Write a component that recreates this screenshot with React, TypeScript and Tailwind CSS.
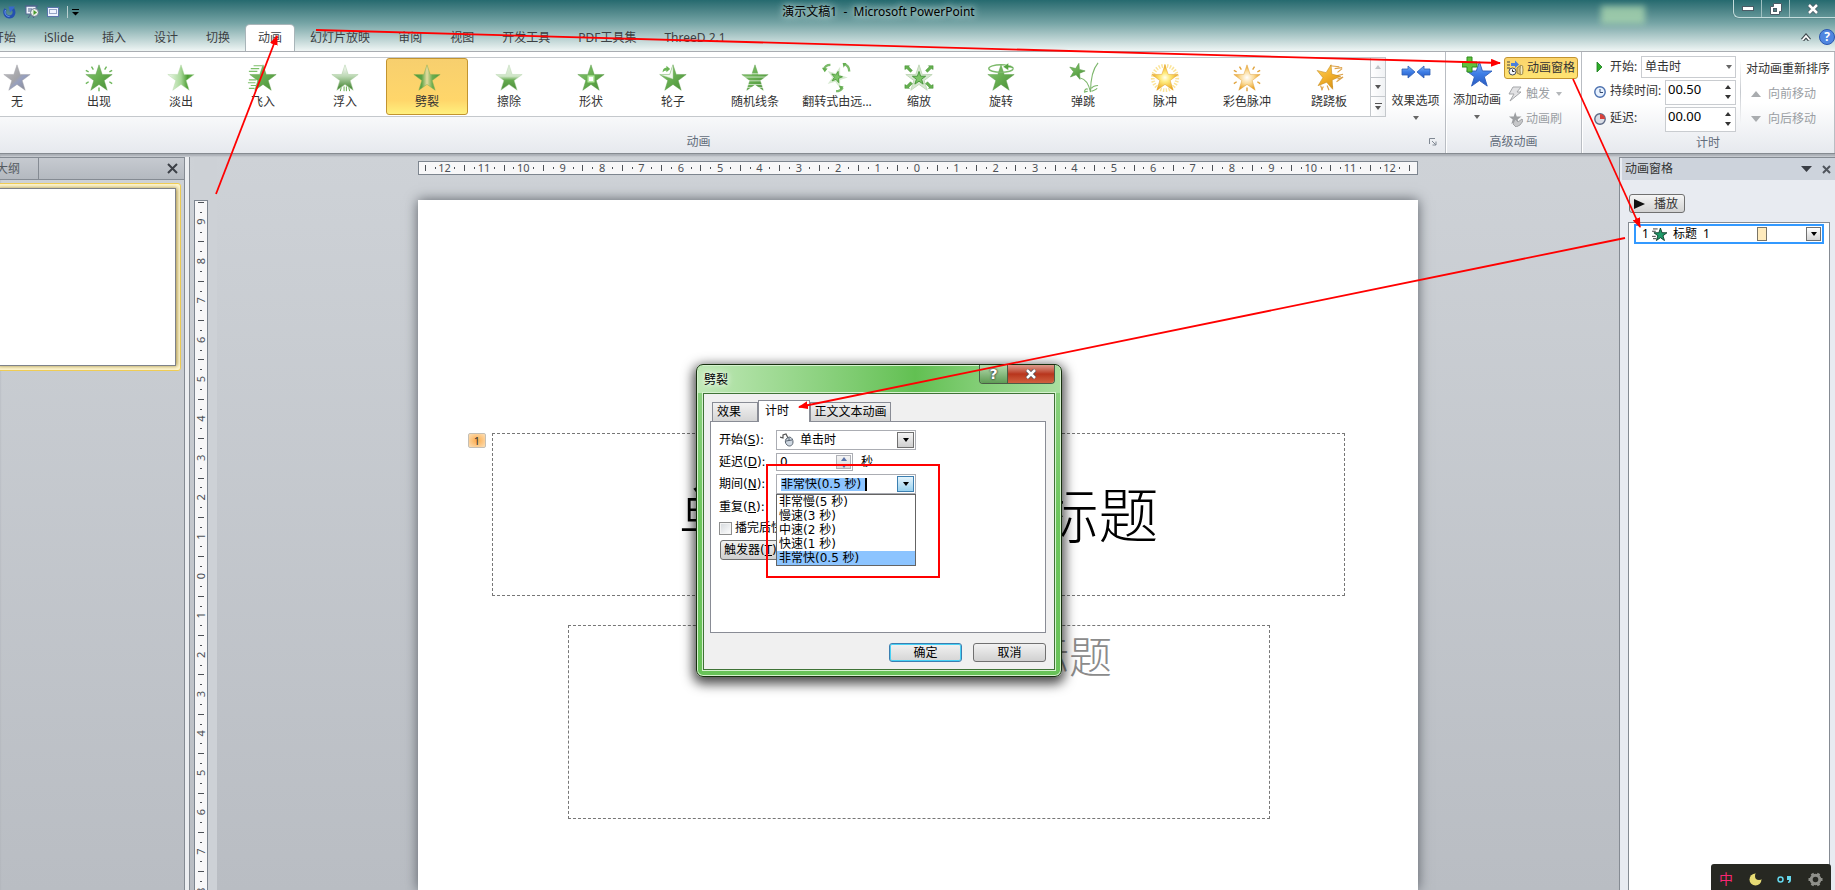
import React, { useState } from "react";
import clsx from "clsx";

const STAR =
  "16,2 19.4,12.2 30,12.3 21.5,18.7 24.7,29 16,22.8 7.3,29 10.5,18.7 2,12.3 12.6,12.2";

type EffectKind =
  | "none"
  | "appear"
  | "fade"
  | "fly"
  | "float"
  | "split"
  | "wipe"
  | "shape"
  | "wheel"
  | "bars"
  | "growTurn"
  | "zoom"
  | "swivel"
  | "bounce"
  | "pulse"
  | "colorPulse"
  | "teeter";

const effects: { kind: EffectKind; label: string }[] = [
  { kind: "none", label: "无" },
  { kind: "appear", label: "出现" },
  { kind: "fade", label: "淡出" },
  { kind: "fly", label: "飞入" },
  { kind: "float", label: "浮入" },
  { kind: "split", label: "劈裂" },
  { kind: "wipe", label: "擦除" },
  { kind: "shape", label: "形状" },
  { kind: "wheel", label: "轮子" },
  { kind: "bars", label: "随机线条" },
  { kind: "growTurn", label: "翻转式由远..." },
  { kind: "zoom", label: "缩放" },
  { kind: "swivel", label: "旋转" },
  { kind: "bounce", label: "弹跳" },
  { kind: "pulse", label: "脉冲" },
  { kind: "colorPulse", label: "彩色脉冲" },
  { kind: "teeter", label: "跷跷板" },
];

const tabs = [
  "开始",
  "iSlide",
  "插入",
  "设计",
  "切换",
  "动画",
  "幻灯片放映",
  "审阅",
  "视图",
  "开发工具",
  "PDF工具集",
  "ThreeD 2.1",
];

const durations = [
  "非常慢(5 秒)",
  "慢速(3 秒)",
  "中速(2 秒)",
  "快速(1 秒)",
  "非常快(0.5 秒)",
];

const Gradients: React.FC = () => (
  <svg width="0" height="0" className="absolute" aria-hidden="true">
    <defs>
      <linearGradient id="g-green" x1="0" y1="0" x2="1" y2="1">
        <stop offset="0" stopColor="#8cc878" />
        <stop offset="0.5" stopColor="#66ad50" />
        <stop offset="1" stopColor="#478c34" />
      </linearGradient>
      <linearGradient id="g-gray" x1="0" y1="0" x2="1" y2="1">
        <stop offset="0" stopColor="#c4c4c8" />
        <stop offset="0.5" stopColor="#a3a3a7" />
        <stop offset="0.6" stopColor="#97a0bf" />
        <stop offset="1" stopColor="#86868a" />
      </linearGradient>
      <linearGradient id="g-fade" x1="0" y1="0" x2="1" y2="0">
        <stop offset="0" stopColor="#eef8ea" />
        <stop offset="0.5" stopColor="#a6d796" />
        <stop offset="0.75" stopColor="#4d9e34" />
        <stop offset="1" stopColor="#6fb65a" />
      </linearGradient>
      <linearGradient id="g-float" x1="0" y1="0" x2="0" y2="1">
        <stop offset="0" stopColor="#ffffff" />
        <stop offset="0.45" stopColor="#bcd8b4" />
        <stop offset="1" stopColor="#357c22" />
      </linearGradient>
      <linearGradient id="g-split" x1="0" y1="0" x2="1" y2="0">
        <stop offset="0" stopColor="#4d9a3a" />
        <stop offset="0.3" stopColor="#5fa548" />
        <stop offset="0.5" stopColor="#e6dca0" />
        <stop offset="0.7" stopColor="#6fae50" />
        <stop offset="1" stopColor="#4d9a3a" />
      </linearGradient>
      <linearGradient id="g-wipe" x1="0" y1="0" x2="0" y2="1">
        <stop offset="0" stopColor="#e2efdd" />
        <stop offset="0.45" stopColor="#cfe5c7" />
        <stop offset="0.6" stopColor="#66ab50" />
        <stop offset="1" stopColor="#4a8c37" />
      </linearGradient>
      <linearGradient id="g-gold" x1="0" y1="0" x2="1" y2="1">
        <stop offset="0" stopColor="#ffd766" />
        <stop offset="0.5" stopColor="#f3b12c" />
        <stop offset="1" stopColor="#d08a10" />
      </linearGradient>
      <radialGradient id="g-glow">
        <stop offset="0" stopColor="#fffff0" />
        <stop offset="0.35" stopColor="#ffec80" />
        <stop offset="1" stopColor="#eda91d" />
      </radialGradient>
      <radialGradient id="g-glow2">
        <stop offset="0" stopColor="#ffffff" />
        <stop offset="0.5" stopColor="#fbdc9c" />
        <stop offset="1" stopColor="#e8a020" />
      </radialGradient>
      <linearGradient id="g-blue" x1="0" y1="0" x2="0" y2="1">
        <stop offset="0" stopColor="#7fb4f5" />
        <stop offset="0.5" stopColor="#3d7de6" />
        <stop offset="1" stopColor="#2a5bc0" />
      </linearGradient>
    </defs>
  </svg>
);

const EffectIcon: React.FC<{ kind: EffectKind }> = ({ kind }) => {
  const star = (fill: string, stroke = "#5c9c49") => (
    <polygon points={STAR} fill={fill} stroke={stroke} strokeWidth="0.5" />
  );
  const green = star("url(#g-green)");
  let art: React.ReactNode = green;

  switch (kind) {
    case "none":
      art = star("url(#g-gray)", "#a0a0a8");
      break;
    case "appear":
      art = (
        <>
          {green}
          <path
            d="M8 4l2 3M24 4l-2 3M2 8l3 1.500M30 8l-3 1.500M2 22l3-2M30 22l-3-2M16 26v4"
            stroke="#6db65a"
            strokeWidth="1.500"
          />
        </>
      );
      break;
    case "fade":
      art = star("url(#g-fade)", "#b4d9a8");
      break;
    case "fly":
      art = (
        <>
          {green}
          <path
            d="M6 3h9M3 6h9M1 9h9M1 18h8M0 21h8M3 24h6M1 27h6"
            stroke="#7cc069"
            strokeWidth="1.200"
          />
        </>
      );
      break;
    case "float":
      art = (
        <>
          {star("url(#g-float)", "#a6c99b")}
          <path d="M12 26l-1 4M15 25v5M17.500 25v5M20 26l1 4" stroke="#5fa84a" />
        </>
      );
      break;
    case "split":
      art = star("url(#g-split)", "#86ad50");
      break;
    case "wipe":
      art = star("url(#g-wipe)", "#b9d7b0");
      break;
    case "shape":
      art = (
        <>
          {green}
          <rect x="13" y="14" width="6" height="6" fill="#fff" stroke="#b5eba0" strokeWidth="1.500" />
        </>
      );
      break;
    case "wheel":
      art = (
        <>
          {green}
          <path d="M16 2v15L2 12.300h10.600z" fill="#f1f8ee" stroke="#a7d09a" strokeWidth="0.500" />
          <path d="M5 10c0-4 2-5 4-5V3l4 3.500L9 10V8C7 8 6 9 5 10z" fill="#6ab455" />
        </>
      );
      break;
    case "bars":
      art = (
        <>
          {green}
          <path d="M0 11.500h32M0 15h32M0 19h32M0 23h32M0 26h32" stroke="#fff" strokeOpacity="0.7" />
        </>
      );
      break;
    case "growTurn":
      art = (
        <>
          <polygon points={STAR} fill="#d7ead1" transform="rotate(18 16 15) translate(3 2) scale(.8)" />
          <polygon points={STAR} fill="#7cc568" stroke="#4c9a39" strokeWidth="2" transform="translate(9 8) scale(.42) rotate(15 16 16)" />
          <path
            d="M2 7C3 3 5 2 9 2M23 1c4 1 6 4 6 8M15 30c4 0 6-2 7-4"
            fill="none"
            stroke="#7dbb6b"
            strokeWidth="2.500"
          />
          <path d="M0 5l3 5 3-4zM22 0l4 0-3 5zM18 24l5 1-3 4z" fill="#65ae51" />
        </>
      );
      break;
    case "zoom":
      art = (
        <>
          <polygon points={STAR} fill="#d5e6cf" stroke="#c0d8b8" />
          <polygon points={STAR} fill="#7cc568" stroke="#47953a" strokeWidth="2" transform="translate(8 8) scale(.5)" />
          <path
            d="M1 3h5L5 4l4 4-2 2-4-4-2 1zM31 3h-5l1 1-4 4 2 2 4-4 2 1zM1 27h5l-1-1 4-4-2-2-4 4-2-1zM31 27h-5l1-1-4-4 2-2 4 4 2-1z"
            fill="#65b050"
            stroke="#3f8c2e"
            strokeWidth="0.500"
          />
        </>
      );
      break;
    case "swivel":
      art = (
        <>
          {green}
          <ellipse cx="16" cy="6" rx="13" ry="4" fill="none" stroke="#7dba6b" strokeWidth="1.500" />
          <path d="M18 4l6-4v2.500c4 .5 6 2 6 4.500-2-2-4-2-6-2v3z" fill="#55a340" stroke="#fff" strokeWidth="0.500" />
        </>
      );
      break;
    case "bounce":
      art = (
        <>
          <polygon points={STAR} fill="url(#g-green)" stroke="#5c9c49" transform="translate(0 -1) scale(.6) rotate(14 16 16)" />
          <path
            d="M13 16c6 1 9 6 11 15 0-14 2-24 8-31M18 31c-1-3 2-4 3-3M25 27c2-3 5-3 7-3M25 30c2-1 5-1 6-3M17 31l4-1"
            fill="none"
            stroke="#7cb66b"
            strokeWidth="1.200"
          />
        </>
      );
      break;
    case "pulse":
      art = (
        <>
          <circle cx="16" cy="16" r="13" fill="none" stroke="#fbe49a" strokeWidth="4" strokeDasharray="1.500 1.500" />
          {star("url(#g-glow)", "#dc9a28")}
        </>
      );
      break;
    case "colorPulse":
      art = (
        <>
          {star("url(#g-glow2)", "#dfa13c")}
          <path
            d="M8 4l2 3M24 4l-2 3M2 8l3 1.500M30 8l-3 1.500M2 22l3-2M30 22l-3-2M16 26v4"
            stroke="#e0a33c"
            strokeWidth="1.500"
          />
        </>
      );
      break;
    case "teeter":
      art = (
        <>
          <path
            d="M17 3l10 1M22 6l8-1M25 10l5-4M22 14l9-2M24 20l7-5M25 17l6-2M7 24l2 5M10 25l-2 4M14 24l2 5M20 26l-3-5"
            stroke="#dda24a"
            strokeWidth="1.200"
          />
          <polygon points={STAR} fill="url(#g-gold)" stroke="#c48a1c" strokeWidth="0.600" transform="rotate(14 16 16) scale(.92)" />
        </>
      );
      break;
  }

  return (
    <svg width="32" height="32" viewBox="-1 -1 34 34" className="shrink-0">
      {art}
    </svg>
  );
};

const Caret: React.FC<{ up?: boolean; className?: string }> = ({ up, className }) => (
  <svg width="6" height="4" viewBox="0 0 6 4" className={clsx("shrink-0", className)}>
    <path d={up ? "M0 4h6L3 0z" : "M0 0h6L3 4z"} fill="currentColor" />
  </svg>
);

const Clock: React.FC<{ red?: boolean }> = ({ red }) => (
  <svg width="12" height="12" viewBox="0 0 12 12" className="shrink-0">
    <circle cx="6" cy="6" r="5.200" fill={red ? "#d9dde6" : "#e8f2ff"} stroke={red ? "#5d6a86" : "#4a6fae"} strokeWidth="1.400" />
    {red ? (
      <path d="M6 1v5h5a5 5 0 00-5-5z" fill="#d8403a" />
    ) : (
      <path d="M6 3v3.500h3" fill="none" stroke="#33486f" />
    )}
  </svg>
);

const TitleBar: React.FC = () => (
  <div className="flex h-6 items-center">
    <div className="flex w-[120px] items-center gap-2 pl-[3px]">
      <button aria-label="重复" className="w-[14px]">
        <svg width="13" height="14" viewBox="0 0 13 14">
          <path d="M2.500 4C0 8 3 12 6.500 12s6-4 3.500-8" fill="none" stroke="#2450b0" strokeWidth="2.800" />
          <path d="M2.500 5C1 8 3 11.500 6.500 11.500" fill="none" stroke="#6f9cf0" />
          <path d="M5.500 1.500h6.500L7 7.500z" fill="#3768cc" />
        </svg>
      </button>
      <button aria-label="从头放映">
        <svg width="14" height="14" viewBox="0 0 14 14">
          <rect x="1" y="1" width="10" height="8" fill="#eef3fb" stroke="#566b96" />
          <path d="M0 1h13M3 13l3-4 3 4M3 4h4M3 6h3" stroke="#4b5f88" fill="none" />
          <circle cx="9.500" cy="7.500" r="4" fill="#e8efe8" stroke="#65768f" />
          <path d="M8.500 5v5l3.500-2.500z" fill="#4b9a2e" />
        </svg>
      </button>
      <button aria-label="选择">
        <svg width="12" height="10" viewBox="0 0 12 10">
          <rect x="0.500" y="0.500" width="11" height="9" fill="#eef4ff" stroke="#5a76ad" />
          <rect x="2.500" y="2.500" width="7" height="4" fill="none" stroke="#3c568c" strokeDasharray="1 1" />
        </svg>
      </button>
      <span className="h-3 w-px bg-[#b9cfcf]" />
      <button aria-label="自定义快速访问工具栏" className="-ml-1">
        <svg width="7" height="7" viewBox="0 0 7 7">
          <path d="M0 .5h7" stroke="#000" />
          <path d="M0 3h7L3.500 6.500z" fill="#000" />
        </svg>
      </button>
    </div>
    <h1 className="flex-1 pr-24 text-center text-xs text-black [text-shadow:0_0_6px_#cfe6e2,0_0_8px_#cfe6e2]">
      演示文稿1&nbsp; -&nbsp; Microsoft PowerPoint
    </h1>
    <div className="flex h-[18px] w-[102px] self-start rounded-bl-md border-b border-l border-[#c3dcdc] shadow-[0_0_1px_#173f42]">
      <button aria-label="最小化" className="flex w-7 items-center justify-center border-r border-[#9fc0c1]">
        <svg width="12" height="5" viewBox="0 0 12 5">
          <rect x="0.500" y="0.500" width="11" height="4" fill="#fff" stroke="#4c5b66" />
        </svg>
      </button>
      <button aria-label="还原" className="flex w-7 items-center justify-center border-r border-[#9fc0c1]">
        <svg width="12" height="12" viewBox="0 0 12 12">
          <path d="M3.500.5h8v8h-2v3h-9v-8h3z" fill="#fff" stroke="#4c5b66" />
          <rect x="3.500" y="5.500" width="3" height="3" fill="#4f8084" stroke="#4c5b66" />
        </svg>
      </button>
      <button aria-label="关闭" className="flex flex-1 items-center justify-center">
        <svg width="12" height="12" viewBox="0 0 12 12">
          <path d="M2 2l8 8M10 2l-8 8" stroke="#4c5b66" strokeWidth="4" />
          <path d="M2 2l8 8M10 2l-8 8" stroke="#fff" strokeWidth="2.500" />
        </svg>
      </button>
    </div>
  </div>
);

const TabRow: React.FC<{ active: string; onSelect: (tab: string) => void }> = ({ active, onSelect }) => (
  <nav className="flex h-[27px] items-end overflow-hidden">
    <div className="-ml-5 flex h-[26px] flex-1 gap-1">
      {tabs.map((tab) => (
        <button
          key={tab}
          onClick={() => onSelect(tab)}
          className={clsx(
            "h-full shrink-0 whitespace-nowrap rounded-t px-3 text-xs text-[#3c4043]",
            tab === active && "bg-white shadow-[0_0_0_1px_#a9b5b9]"
          )}
        >
          {tab}
        </button>
      ))}
    </div>
    <button aria-label="功能区最小化" className="mb-[10px] mr-2">
      <svg width="10" height="8" viewBox="0 0 10 8">
        <path d="M1.500 7L5 3l3.500 4" fill="none" stroke="#3f4a4e" strokeWidth="4" />
        <path d="M1.500 7L5 3l3.500 4" fill="none" stroke="#fff" strokeWidth="1.800" />
      </svg>
    </button>
    <button
      aria-label="帮助"
      className="mb-[6px] h-4 w-4 rounded-full border border-[#2a57b0] bg-[#4f86e0] text-xs font-bold leading-[14px] text-white"
    >
      ?
    </button>
  </nav>
);

const RibbonGroup: React.FC<{
  title: string;
  className?: string;
  launcher?: boolean;
  children: React.ReactNode;
}> = ({ title, className, launcher, children }) => (
  <section className={clsx("flex flex-col border-r border-[#b9bdc3] shadow-[1px_0_0_#fff]", className)}>
    <div className="flex flex-1">{children}</div>
    <div className="flex h-[23px] items-center text-xs text-[#626c7a]">
      <h2 className="flex-1 text-center">{title}</h2>
      {launcher && (
        <button aria-label="显示其他效果选项" className="ml-1 mr-1 flex w-4 justify-center">
          <svg width="8" height="8" viewBox="0 0 8 8">
            <path d="M.5 6V.5H6M3 3l4 4M7 3.500V7H3.500" fill="none" stroke="#808893" />
          </svg>
        </button>
      )}
    </div>
  </section>
);

const Ribbon: React.FC = () => {
  const [selected, setSelected] = useState<EffectKind>("split");

  return (
    <div className="flex h-[103px] shrink-0 overflow-hidden border-b border-t border-b-[#868b91] border-t-[#a9adb2] bg-linear-to-b from-white from-50% to-[#e6e9ee]">
      <RibbonGroup title="动画" launcher className="-ml-6 min-w-0 flex-1">
        <div className="mt-[5px] flex h-[60px] min-w-0 border-y border-[#c4c8cc] bg-white">
          {effects.map(({ kind, label }) => (
            <button
              key={kind}
              onClick={() => setSelected(kind)}
              className={clsx(
                "flex h-[57px] w-[82px] shrink-0 flex-col items-center rounded-[3px] border pt-[3px] text-xs text-[#333]",
                kind === selected
                  ? "border-[#c29430] bg-linear-to-b from-[#f7cf6e] via-[#ffd66a] via-75% to-[#fff07e]"
                  : "border-transparent"
              )}
            >
              <EffectIcon kind={kind} />
              <span className="leading-4">{label}</span>
            </button>
          ))}
          <div className="flex w-4 shrink-0 flex-col divide-y divide-[#c4c8cc] border-x border-[#c4c8cc] bg-linear-to-r from-white to-[#f0f2f4]">
            <button aria-label="上一行" className="flex flex-1 items-center justify-center text-[#c0c4c8]">
              <Caret up />
            </button>
            <button aria-label="下一行" className="flex flex-1 items-center justify-center text-[#555]">
              <Caret />
            </button>
            <button aria-label="其他" className="flex flex-1 flex-col items-center justify-center gap-0.5 text-[#555]">
              <span className="h-px w-[7px] bg-[#555]" />
              <Caret />
            </button>
          </div>
        </div>
        <button className="flex flex-1 flex-col items-center pt-[11px] text-xs text-[#333]">
          <svg width="30" height="18" viewBox="0 0 30 18">
            <path d="M1 6h6V3l7 6-7 6v-3H1zM29 6h-6V3l-7 6 7 6v-3h6z" fill="url(#g-blue)" stroke="#2f5fb5" strokeWidth="0.800" />
          </svg>
          <span className="mt-3 whitespace-nowrap leading-4">效果选项</span>
          <Caret className="mt-[7px] text-[#666]" />
        </button>
      </RibbonGroup>

      <RibbonGroup title="高级动画" className="w-[136px] shrink-0">
        <button className="flex w-[58px] flex-col items-center pl-1 pt-1 text-xs text-[#333]">
          <svg width="30" height="32" viewBox="0 0 30 32" className="shrink-0">
            <polygon points={STAR} fill="url(#g-blue)" stroke="#2b5cbc" transform="translate(3 4) scale(.9)" />
            <path d="M5 1h5v5h5v5h-5v5H5v-5H0V6h5z" fill="#5fc23c" stroke="#2f8a1c" />
          </svg>
          <span className="mt-1 whitespace-nowrap leading-4">添加动画</span>
          <Caret className="mt-[7px] text-[#666]" />
        </button>
        <div className="flex flex-col pt-[5px] text-xs">
          <button className="flex h-[22px] w-[74px] items-center gap-[3px] rounded-[3px] border border-[#c29430] bg-linear-to-b from-[#fbd46c] to-[#ffe472] pl-0.5 text-[#333]">
            <svg width="17" height="16" viewBox="0 0 17 16" className="shrink-0">
              <path d="M0 2h3M0 5h3M0 8h3" stroke="#444" />
              <path d="M4 3h4V.500L12 4.500 8 8V6H4z" fill="#4a7fdc" />
              <circle cx="5.500" cy="11.500" r="3.500" fill="#f4f6fa" stroke="#444c5e" />
              <path d="M5.500 9.500v2h2" stroke="#222" fill="none" />
              <path d="M10 8l4-3c2 1 2 8 0 10l-4-2z" fill="#d9c07a" stroke="#8a7430" strokeWidth="0.800" />
              <ellipse cx="14.500" cy="10" rx="1.500" ry="5" fill="#f5ecc4" stroke="#8a7430" strokeWidth="0.800" />
            </svg>
            <span className="whitespace-nowrap">动画窗格</span>
          </button>
          <button disabled className="mt-[3px] flex h-6 items-center gap-1 pl-1 text-[#9a9ea3]">
            <svg width="14" height="16" viewBox="0 0 14 16" className="shrink-0">
              <path d="M5 1h8L9 6h4L2 15l4-7H1z" fill="#e2e2e4" stroke="#a5a7aa" />
            </svg>
            触发
            <Caret className="ml-0.5 text-[#b4b7ba]" />
          </button>
          <button disabled className="flex h-[25px] items-center gap-[3px] pl-1 text-[#9a9ea3]">
            <svg width="15" height="16" viewBox="0 0 15 16" className="shrink-0">
              <polygon points={STAR} fill="#9d9fa2" transform="scale(.45)" />
              <path d="M7 8l3 3 4-3 1 2-3 4-4 2-3-3z" fill="#c6c7c9" stroke="#9fa1a4" />
            </svg>
            动画刷
          </button>
        </div>
      </RibbonGroup>

      <RibbonGroup title="计时" className="w-[253px] shrink-0">
        <div className="flex w-[154px] flex-col gap-px pl-3 pt-[3px] text-xs text-[#333]">
          <div className="flex h-[23px] items-center">
            <svg width="16" height="10" viewBox="0 0 16 10" className="shrink-0">
              <path d="M3 0v10l5-5z" fill="#2fae2a" stroke="#157a18" strokeWidth="0.800" />
            </svg>
            <label htmlFor="start" className="flex-1 whitespace-nowrap">开始:</label>
            <div className="relative flex w-[95px] items-center">
              <select id="start" className="h-[22px] w-full appearance-none border border-[#c9ccd0] bg-white pl-[3px] text-xs">
                <option>单击时</option>
              </select>
              <Caret className="pointer-events-none absolute right-1 text-[#666]" />
            </div>
          </div>
          {[
            { id: "duration", label: "持续时间:", value: "00.50", red: false },
            { id: "delay", label: "延迟:", value: "00.00", red: true },
          ].map((row) => (
            <div key={row.id} className="flex h-[26px] items-center">
              <Clock red={row.red} />
              <label htmlFor={row.id} className="ml-1 flex-1 whitespace-nowrap pb-0.5">{row.label}</label>
              <div className="flex h-[25px] w-[71px] items-center border border-[#c9ccd0] bg-white pr-1">
                <input id={row.id} defaultValue={row.value} className="w-0 flex-1 pb-1 pl-0.5 text-[13px] text-black" />
                <div className="flex flex-col gap-[6px] text-[#333]">
                  <Caret up />
                  <Caret />
                </div>
              </div>
            </div>
          ))}
        </div>
        <div className="ml-1 mt-2 h-16 w-px shrink-0 bg-linear-to-b from-transparent via-[#c5c9ce] to-transparent" />
        <div className="flex flex-1 flex-col pl-[5px] pt-[5px] text-xs">
          <h3 className="flex h-6 items-center whitespace-nowrap text-[#333]">对动画重新排序</h3>
          <button disabled className="flex h-[25px] items-center gap-[7px] whitespace-nowrap pl-[5px] text-[#9a9ea3]">
            <svg width="10" height="6" viewBox="0 0 10 6">
              <path d="M0 6h10L5 0z" fill="#a9acaf" />
            </svg>
            向前移动
          </button>
          <button disabled className="flex h-[25px] items-center gap-[7px] whitespace-nowrap pl-[5px] text-[#9a9ea3]">
            <svg width="10" height="6" viewBox="0 0 10 6">
              <path d="M0 0h10L5 6z" fill="#a9acaf" />
            </svg>
            向后移动
          </button>
        </div>
      </RibbonGroup>
    </div>
  );
};

const UNIT = 39.37;

const Ruler: React.FC<{ vertical?: boolean; center: number; length: number; range: number }> = ({
  vertical,
  center,
  length,
  range,
}) => {
  const marks = Array.from({ length: range * 2 + 1 }, (_, i) => i - range);
  return (
    <svg
      width={vertical ? 14 : length}
      height={vertical ? length : 14}
      className="block shrink-0 border border-[#7d858f] bg-[#f7f7f8]"
    >
      {marks.map((n) => {
        const pos = center + n * UNIT;
        const ticks = [
          { at: pos - UNIT / 2, half: 3 },
          { at: pos - UNIT / 4, half: 1 },
          { at: pos + UNIT / 4, half: 1 },
          { at: pos + UNIT / 2, half: 3 },
        ];
        return (
          <g key={n} fill="#4c5056" stroke="none">
            <text
              x={vertical ? 0 : pos}
              y={vertical ? 0 : 10}
              transform={vertical ? `translate(10 ${pos}) rotate(-90)` : undefined}
              textAnchor="middle"
              fontSize="11"
            >
              {Math.abs(n)}
            </text>
            {ticks.map(({ at, half }) => (
              <rect
                key={at}
                x={vertical ? 6 - half : Math.round(at)}
                y={vertical ? Math.round(at) : 6 - half}
                width={vertical ? half * 2 : 1}
                height={vertical ? 1 : half * 2}
              />
            ))}
          </g>
        );
      })}
    </svg>
  );
};

const OutlinePane: React.FC = () => (
  <aside className="mt-[3px] flex w-[185px] shrink-0 flex-col overflow-hidden border-r border-t border-[#858b93]">
    <div className="flex h-[22px] shrink-0 items-center border-b border-[#858b93] bg-linear-to-b from-[#c6cad0] to-[#b4b9c0] text-xs text-[#555b62]">
      <button className="-ml-1 flex h-full w-[43px] items-center border-r border-[#858b93]">大纲</button>
      <button aria-label="关闭" className="ml-auto mr-[6px]">
        <svg width="11" height="11" viewBox="0 0 11 11">
          <path d="M1 1l9 9M10 1l-9 9" stroke="#3c4047" strokeWidth="2" />
        </svg>
      </button>
    </div>
    <div className="-ml-2 mr-[3px] mt-[3px] rounded-[3px] border border-[#f0cd55] bg-[#fff6cf] p-1">
      <div className="h-[178px] border border-[#7e828a] bg-white shadow-[1px_0_4px_#a08a40]" />
    </div>
  </aside>
);

const AnimationPane: React.FC = () => (
  <aside className="mt-[3px] flex w-[216px] shrink-0 flex-col border-l border-t border-[#858b93] bg-[#e8ebf1] pl-0.5 text-xs text-[#333]">
    <div className="flex h-[22px] items-center bg-[#cdd3dc] pl-[3px]">
      <h2 className="flex-1">动画窗格</h2>
      <svg width="11" height="6" viewBox="0 0 11 6">
        <path d="M0 0h11L5.500 6z" fill="#3a3e45" />
      </svg>
      <button aria-label="关闭" className="ml-[10px] mr-1">
        <svg width="9" height="9" viewBox="0 0 9 9">
          <path d="M1 1l7 7M8 1L1 8" stroke="#50555d" strokeWidth="2" />
        </svg>
      </button>
    </div>
    <button className="ml-[7px] mt-[14px] flex h-[19px] w-14 items-center gap-[9px] rounded-[3px] border border-[#707070] bg-linear-to-b from-[#f5f5f5] to-[#d2d2d2] pl-1">
      <svg width="11" height="10" viewBox="0 0 11 10">
        <path d="M0 0v10l11-5z" fill="#111" />
      </svg>
      播放
    </button>
    <ul className="ml-[6px] mr-[5px] mt-[9px] flex-1 border border-b-0 border-[#858b93] bg-white pl-[5px] pr-[5px] pt-px">
      <li className="flex h-5 items-center border-2 border-[#3399ff] pl-[6px] pr-px text-black">
        1
        <svg width="15" height="13" viewBox="0 0 32 28" className="ml-[3px]">
          <polygon points={STAR} fill="#1f9a68" stroke="#0f3f2c" strokeWidth="2" transform="translate(2 -2)" />
          <path d="M2 2h10M0 7h8M0 18h8M2 23h7" stroke="#333" strokeWidth="2" />
        </svg>
        <span className="ml-[6px] flex-1">标题&nbsp; 1</span>
        <span className="mr-[39px] h-[14px] w-[10px] border border-[#7a7466] bg-[#ffebbd]" />
        <button aria-label="效果菜单" className="flex h-[14px] w-[15px] items-center justify-center border border-[#707070] bg-linear-to-b from-white to-[#d4d4d4]">
          <Caret />
        </button>
      </li>
    </ul>
  </aside>
);

const Slide: React.FC = () => (
  <div className="mt-[25px] flex w-[1000px] flex-1 shrink-0 flex-col items-center bg-white pl-px pt-[233px] font-light shadow-[0_0_12px_#5a5f66]">
    <div className="relative flex h-[163px] w-[853px] shrink-0 items-center justify-center border border-dashed border-[#777]">
      <span className="absolute -left-[25px] -top-px h-[15px] w-[18px] rounded-xs border border-[#c5bfb4] bg-[radial-gradient(#fcab4a,#fde0b8)] text-center text-[11px] font-normal leading-[13px] text-[#333]">
        1
      </span>
      <h2 className="whitespace-nowrap text-[60px] leading-none text-black">单击此处添加标题</h2>
    </div>
    <div className="mt-[29px] flex h-[194px] w-[702px] shrink-0 justify-center border border-dashed border-[#777] pt-[9px]">
      <p className="whitespace-nowrap text-[43px] leading-none text-[#8b8b8b]">单击此处添加副标题</p>
    </div>
  </div>
);

const DropButton: React.FC<{ active?: boolean }> = ({ active }) => (
  <span
    className={clsx(
      "flex h-4 w-[17px] shrink-0 items-center justify-center border text-black",
      active
        ? "border-[#3c7fb1] bg-linear-to-b from-[#e5f4fc] to-[#98d1ef]"
        : "border-[#707070] bg-linear-to-b from-[#f5f5f5] to-[#cfcfcf]"
    )}
  >
    <Caret />
  </span>
);

const EffectDialog: React.FC = () => {
  const [duration, setDuration] = useState(durations[4]);
  const label = "w-[57px] shrink-0 whitespace-nowrap";

  return (
    <div
      role="dialog"
      aria-label="劈裂"
      className="absolute left-[696px] top-[364px] w-[366px] rounded-[7px] border border-[#17300f] bg-linear-to-b from-[#8fd384] via-[#6cc65c] to-[#68c258] px-[6px] pb-[6px] text-xs text-black shadow-[0_4px_12px_3px_rgba(0,0,0,0.7),inset_0_0_0_1px_#d6f2cf] [font-family:'DejaVu_Sans','Noto_Sans_CJK_SC',sans-serif]"
    >
      <div className="-mx-[5px] mt-px flex h-[27px] items-start rounded-t-[5px] bg-linear-to-r from-[#bfe8b6] via-[#62c052] via-60% to-[#a9dfa0] pl-[6px]">
        <h2 className="flex-1 pt-[6px] leading-4 [text-shadow:0_0_5px_#fff,0_0_8px_#fff]">劈裂</h2>
        <div className="-mt-px mr-[5px] flex h-[19px] overflow-hidden rounded-b-[4px] border border-t-0 border-[#4a5c46] text-white">
          <button aria-label="帮助" className="w-7 border-r border-[#4a5c46] bg-linear-to-b from-[#b5dcae] to-[#5f9c55] text-sm font-bold leading-4 [text-shadow:0_0_2px_#333,0_0_2px_#333]">
            ?
          </button>
          <button aria-label="关闭" className="flex w-[46px] items-center justify-center bg-linear-to-b from-[#dc9a8c] via-[#b8351c] to-[#d0603f]">
            <svg width="12" height="10" viewBox="0 0 12 10">
              <path d="M2 1l8 8M10 1L2 9" stroke="#4d4d55" strokeWidth="4" />
              <path d="M2 1l8 8M10 1L2 9" stroke="#fff" strokeWidth="2.500" />
            </svg>
          </button>
        </div>
      </div>

      <div className="border border-[#3f7336] bg-[#f0f0f0] pb-[7px] pl-[6px] pr-2 pt-[6px] shadow-[0_0_0_1px_#d6f2cf]">
        <div role="tablist" className="flex items-end pl-0.5">
          <button role="tab" className="h-[19px] w-[46px] border border-b-0 border-[#898c95] bg-linear-to-b from-[#f2f2f2] to-[#d5d5d5] pr-3 leading-4">
            效果
          </button>
          <button role="tab" aria-selected className="relative -mb-px h-[22px] w-[52px] border border-b-0 border-[#898c95] bg-white pb-0.5 pr-[14px]">
            计时
          </button>
          <button role="tab" className="h-[19px] w-[81px] whitespace-nowrap border border-b-0 border-[#898c95] bg-linear-to-b from-[#f2f2f2] to-[#d5d5d5] pl-0 leading-4">
            正文文本动画
          </button>
        </div>

        <div className="flex h-[212px] flex-col border border-[#898c95] bg-white pl-2 pt-2">
          <div className="flex h-5 items-center">
            <label htmlFor="dlg-start" className={label}>开始(<u>S</u>):</label>
            <div className="relative flex w-[140px] items-center">
              <select id="dlg-start" className="h-5 w-full appearance-none border border-[#abadb3] bg-white pl-[23px] text-xs">
                <option>单击时</option>
              </select>
              <svg width="14" height="14" viewBox="0 0 14 14" className="pointer-events-none absolute left-1">
                <path d="M0 4l3 1V2l3-1 2 4" fill="none" stroke="#555" strokeWidth="1.200" />
                <path d="M6 6l3-2c3 0 4 3 4 5 0 4-4 5-6 3S5 8 6 6z" fill="#cfd8e2" stroke="#5a6470" />
                <path d="M6 8l6-1M9 5v3" stroke="#5a6470" />
              </svg>
              <span className="pointer-events-none absolute right-0.5">
                <DropButton />
              </span>
            </div>
          </div>

          <div className="mt-[3px] flex h-[18px] items-center">
            <label htmlFor="dlg-delay" className={label}>延迟(<u>D</u>):</label>
            <div className="flex h-[18px] w-[77px] items-center border border-[#abadb3] pl-[3px] pr-px">
              <input id="dlg-delay" defaultValue="0" className="w-0 flex-1" />
              <div className="flex h-[14px] w-[15px] flex-col items-center justify-center gap-[3px] border border-[#b0b2b8] bg-linear-to-b from-[#f4f4f4] to-[#d9d9d9] text-[#5a72a8]">
                <Caret up />
                <Caret />
              </div>
            </div>
            <span className="ml-2">秒</span>
          </div>

          <div className="mt-[3px] flex h-5 items-center">
            <label htmlFor="dlg-duration" className={label}>期间(<u>N</u>):</label>
            <div className="relative flex h-5 w-[140px] items-center justify-between border border-[#abadb3] bg-white pl-1 pr-px">
              <input
                id="dlg-duration"
                value={duration}
                onChange={(e) => setDuration(e.target.value)}
                className="h-[13px] w-[86px] border-r-2 border-black bg-[#8cc4ff]"
              />
              <button aria-label="展开">
                <DropButton active />
              </button>
              <ul role="listbox" className="absolute -left-px top-[19px] z-10 w-[140px] border border-[#646464] bg-white">
                {durations.map((item) => (
                  <li
                    key={item}
                    role="option"
                    aria-selected={item === duration}
                    onClick={() => setDuration(item)}
                    className={clsx("whitespace-pre pl-0.5 leading-[14px]", item === duration && "bg-[#8cc4ff]")}
                  >
                    {item}
                  </li>
                ))}
              </ul>
            </div>
          </div>

          <div className="mt-[3px] flex h-5 items-center">
            <label htmlFor="dlg-repeat" className={label}>重复(<u>R</u>):</label>
            <select id="dlg-repeat" className="h-[18px] w-[140px] appearance-none border border-[#abadb3]" />
          </div>

          <label className="mt-[3px] flex h-4 items-center gap-[3px]">
            <input type="checkbox" className="h-[13px] w-[13px] appearance-none border border-[#8e8f8f] bg-linear-to-br from-[#d4d8dc] to-white shadow-[inset_0_0_0_1px_#f4f4f4]" />
            播完后快退
          </label>

          <button className="ml-px mt-1 flex h-5 w-[110px] items-center rounded-[3px] border border-[#707070] bg-linear-to-b from-[#f2f2f2] to-[#cfcfcf] pl-[3px]">
            触发器(<u>T</u>)
          </button>
        </div>

        <div className="mt-[10px] flex justify-end gap-[11px]">
          <button className="h-[19px] w-[73px] rounded-[3px] border border-[#3c7fb1] bg-linear-to-b from-[#f2f2f2] to-[#d5d5d5] leading-4 shadow-[inset_0_0_0_1px_#48d1f5]">
            确定
          </button>
          <button className="h-[19px] w-[73px] rounded-[3px] border border-[#707070] bg-linear-to-b from-[#f2f2f2] to-[#d0d0d0] leading-4">
            取消
          </button>
        </div>
      </div>
    </div>
  );
};

const Annotations: React.FC = () => (
  <svg className="pointer-events-none absolute inset-0 h-full w-full" aria-hidden="true">
    <defs>
      <marker id="head" markerWidth="10" markerHeight="8" refX="9" refY="4" orient="auto" markerUnits="userSpaceOnUse">
        <path d="M0 0l10 4-10 4z" fill="#f00" />
      </marker>
    </defs>
    <g stroke="#f00" strokeWidth="1.800" fill="none">
      <path d="M216 194L277 36" markerEnd="url(#head)" />
      <path d="M316 30L1500 63" markerEnd="url(#head)" />
      <path d="M1573 79L1640 227" markerEnd="url(#head)" />
      <path d="M1625 238L799 407" markerEnd="url(#head)" />
      <rect x="767" y="465" width="172" height="112" strokeWidth="2" />
    </g>
  </svg>
);

const ImeBar: React.FC = () => (
  <div className="absolute bottom-0 right-1 flex h-[26px] w-[120px] items-center justify-between rounded-t-[3px] bg-[#272822] px-2 pt-1">
    <span className="text-sm leading-4 text-[#f92672]">中</span>
    <svg width="13" height="13" viewBox="0 0 13 13">
      <circle cx="6.500" cy="6.500" r="6" fill="#e6db74" />
      <circle cx="10" cy="3" r="4" fill="#272822" />
    </svg>
    <svg width="15" height="11" viewBox="0 0 15 11">
      <circle cx="3.500" cy="5.500" r="2.500" fill="none" stroke="#66d9ef" strokeWidth="1.500" />
      <path d="M10 2h4v4c0 2-1 3-3 3V7.500c1 0 1-.5 1-1.500h-2z" fill="#66d9ef" />
    </svg>
    <svg width="15" height="15" viewBox="0 0 15 15">
      <circle cx="7.500" cy="7.500" r="4.300" fill="none" stroke="#8f908a" strokeWidth="3" />
      <path d="M4 1.500l1.500 2.500M11 1.500L9.500 4M.5 7.500H3M12 7.500h2.500M4 13.500L5.500 11M11 13.500L9.500 11" stroke="#8f908a" strokeWidth="3" />
    </svg>
  </div>
);

export default function App() {
  const [tab, setTab] = useState("动画");

  return (
    <div className="relative flex h-screen flex-col overflow-hidden bg-[#c8ccd1] [font-family:'Noto_Sans','Noto_Sans_CJK_SC',sans-serif]">
      <Gradients />
      <header className="relative shrink-0 bg-linear-to-b from-[#256a6f] via-[#75a4a5] via-45% to-[#f0f6f5]">
        <span className="absolute right-[190px] top-[6px] h-[18px] w-11 bg-[#a9d5af] opacity-80 blur-[3px]" />
        <div className="relative">
          <TitleBar />
          <TabRow active={tab} onSelect={setTab} />
        </div>
      </header>
      <Ribbon />
      <main className="flex min-h-0 flex-1 bg-linear-to-b from-[#ced2d7] to-[#b9bdc3] shadow-[inset_0_2px_2px_#a8adb4]">
        <OutlinePane />
        <div className="mt-[3px] w-[5px] shrink-0 border-r border-[#858b93] bg-[#eceef1]" />
        <div className="flex min-w-0 flex-1 pl-1">
          <div className="mt-1 flex w-[23px] shrink-0 overflow-hidden bg-[#cdd1d6] pt-[42px]">
            <Ruler vertical center={375} length={720} range={9} />
          </div>
          <div className="flex min-w-0 flex-1 flex-col items-center pt-[7px]">
            <Ruler center={498} length={1000} range={12} />
            <Slide />
          </div>
        </div>
        <AnimationPane />
      </main>
      <EffectDialog />
      <Annotations />
      <ImeBar />
    </div>
  );
}
